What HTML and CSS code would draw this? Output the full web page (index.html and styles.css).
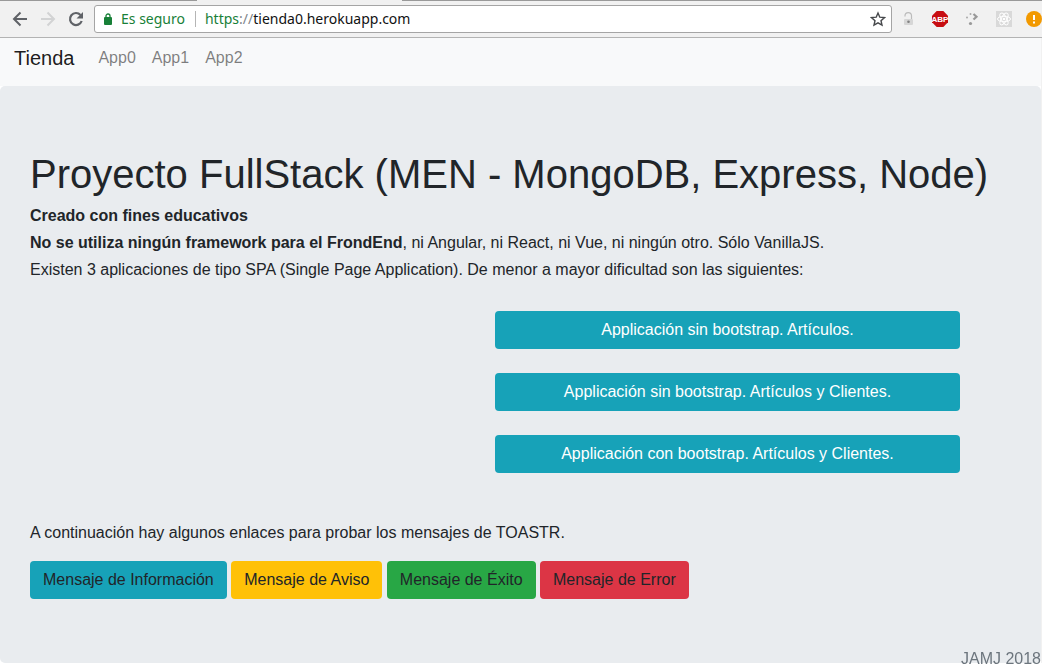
FILE: index.html
```html
<!DOCTYPE html>
<html lang="es">
<head>
<meta charset="utf-8">
<meta name="viewport" content="width=device-width, initial-scale=1">
<title>Tienda</title>
<link rel="stylesheet" href="styles.css">
</head>
<body>
<header class="browser">
  <div class="tab-edge"><span class="tab-gap"></span></div>
  <div class="toolbar">
    <div class="nav-buttons">
      <button class="icon-button" type="button" aria-label="Atrás">
        <svg width="16" height="16" viewBox="0 0 16 16" fill="none" stroke="#5f6267" stroke-width="2"><path d="M15 8H2.500M8.500 1.500L2 8l6.500 6.500"/></svg>
      </button>
      <button class="icon-button" type="button" aria-label="Adelante" disabled>
        <svg width="16" height="16" viewBox="0 0 16 16" fill="none" stroke="#d2d3d4" stroke-width="2"><path d="M1 8h12.500M7.500 1.500L14 8l-6.500 6.500"/></svg>
      </button>
      <button class="icon-button" type="button" aria-label="Recargar">
        <svg width="16" height="16" viewBox="0 0 16 16"><path d="M13.700 10A6 6 0 1 1 12.500 4" fill="none" stroke="#5f6267" stroke-width="2.200"/><path d="M15 1v6.500H8.500z" fill="#5f6267"/></svg>
      </button>
    </div>
    <div class="address">
      <svg class="lock" width="8" height="12" viewBox="0 0 8 12"><path d="M2 5V3a2 2 0 0 1 4 0v2" fill="none" stroke="#188038" stroke-width="1.300"/><rect y="4" width="8" height="8" rx="1" fill="#188038"/></svg>
      <span class="secure">Es seguro</span>
      <span class="divider"></span>
      <label class="scheme" for="url"><span class="https">https</span>://</label>
      <input class="url" id="url" type="text" value="tienda0.herokuapp.com">
      <button class="icon-button" type="button" aria-label="Marcador">
        <svg width="16" height="16" viewBox="0 0 16 16"><path d="M8 2l1.800 4.200 4.700.4-3.500 3.100 1 4.500L8 11.900l-4 2.300 1-4.500L1.500 6.600l4.700-.4z" fill="none" stroke="#46484b" stroke-width="1.400"/></svg>
      </button>
    </div>
    <div class="extensions">
      <button class="icon-button" type="button" aria-label="Candado">
        <svg width="16" height="16" viewBox="0 0 16 16"><path d="M5 5.500V4.800a3 3 0 0 1 6.500 0V8" fill="none" stroke="#bbb" stroke-width="1.200"/><rect x="4" y="8" width="9" height="6" rx="1" fill="#d6d6d6"/><circle cx="8.500" cy="10.700" r="1.300" fill="#808080"/></svg>
      </button>
      <button class="icon-button" type="button" aria-label="Bloqueador de anuncios">
        <svg width="16" height="16" viewBox="0 0 16 16"><path d="M4.700 0h6.600L16 4.700v6.600L11.300 16H4.700L0 11.300V4.700z" fill="#c70d12"/><text class="abp-text" x="8" y="11" text-anchor="middle" fill="#fff">ABP</text></svg>
      </button>
      <button class="icon-button" type="button" aria-label="Puntos">
        <svg width="16" height="16" viewBox="0 0 16 16"><g fill="#aaa"><circle cx="6.500" cy="3" r="1"/><circle cx="3" cy="6.500" r="1"/><circle cx="6.500" cy="12.500" r="1.600" fill="#999"/></g><path d="M9.500 3l3 2.700-3 2.800" fill="none" stroke="#999" stroke-width="2.200"/></svg>
      </button>
      <button class="icon-button" type="button" aria-label="React">
        <svg width="16" height="16" viewBox="0 0 16 16"><rect width="16" height="16" fill="#d9d9d9"/><g fill="none" stroke="#fff"><ellipse cx="8" cy="8" rx="6.500" ry="2.700"/><ellipse cx="8" cy="8" rx="6.500" ry="2.700" transform="rotate(60 8 8)"/><ellipse cx="8" cy="8" rx="6.500" ry="2.700" transform="rotate(120 8 8)"/></g><circle cx="8" cy="8" r="1.300" fill="#fff"/></svg>
      </button>
      <button class="icon-button notice" type="button" aria-label="Aviso del navegador">
        <svg width="16" height="16" viewBox="0 0 16 16"><circle cx="8" cy="8" r="8" fill="#f29900"/><path d="M7 4h2v5H7zM7 10.500h2v2H7z" fill="#fff"/></svg>
      </button>
    </div>
  </div>
</header>
<div class="page">
  <nav class="navbar">
    <a class="brand" href="#">Tienda</a>
    <a class="nav-link" href="#">App0</a>
    <a class="nav-link" href="#">App1</a>
    <a class="nav-link" href="#">App2</a>
  </nav>
  <main class="jumbotron">
    <h1 class="title">Proyecto FullStack (MEN - MongoDB, Express, Node)</h1>
    <div class="intro">
      <p><strong>Creado con fines educativos</strong></p>
      <p><strong>No se utiliza ningún framework para el FrondEnd</strong>, ni Angular, ni React, ni Vue, ni ningún otro. Sólo VanillaJS.</p>
      <p>Existen 3 aplicaciones de tipo SPA (Single Page Application). De menor a mayor dificultad son las siguientes:</p>
    </div>
    <div class="apps">
      <a class="btn app-link" href="#">Applicación sin bootstrap. Artículos.</a>
      <a class="btn app-link" href="#">Applicación sin bootstrap. Artículos y Clientes.</a>
      <a class="btn app-link" href="#">Applicación con bootstrap. Artículos y Clientes.</a>
    </div>
    <p class="toast-text">A continuación hay algunos enlaces para probar los mensajes de TOASTR.</p>
    <div class="toasts">
      <button class="btn info" type="button">Mensaje de Información</button>
      <button class="btn warning" type="button">Mensaje de Aviso</button>
      <button class="btn success" type="button">Mensaje de Éxito</button>
      <button class="btn danger" type="button">Mensaje de Error</button>
    </div>
  </main>
</div>
<footer class="footer">JAMJ 2018</footer>
</body>
</html>
```
FILE: styles.css
```css
* {
  box-sizing: border-box;
}

body {
  margin: 0;
  background: #fff;
  color: #212529;
  font: 16px/24px "Liberation Sans", Arial, sans-serif;
}

p,
h1 {
  margin: 0;
}

a {
  text-decoration: none;
}

.browser {
  background: #f1f1f1;
  border-bottom: 1px solid #b3b3b3;
}

.tab-edge {
  height: 1px;
  padding-left: 197px;
  background: #999;
}

.tab-gap {
  display: block;
  width: 205px;
  height: 1px;
  background: #f1f1f1;
}

.toolbar {
  display: flex;
  align-items: center;
  height: 36px;
  padding-left: 12px;
}

.nav-buttons {
  display: flex;
  gap: 12px;
  margin-right: 10px;
}

.icon-button {
  display: block;
  flex: none;
  width: 16px;
  height: 16px;
  padding: 0;
  border: 0;
  background: none;
}

.icon-button svg {
  display: block;
}

.address {
  display: flex;
  flex: 1;
  align-items: center;
  min-width: 0;
  height: 28px;
  padding: 0 5px 0 9px;
  border: 1px solid #a5a5a5;
  border-radius: 3px;
  background: #fff;
  font: 14px/20px "Noto Sans", sans-serif;
}

.secure {
  margin-left: 9px;
  color: #188038;
}

.divider {
  width: 1px;
  height: 16px;
  margin: 0 9px 0 10px;
  background: #b5b5b5;
}

.scheme {
  color: #80868b;
}

.https {
  color: #188038;
}

.url {
  flex: 1;
  min-width: 0;
  padding: 0;
  border: 0;
  outline: 0;
  background: none;
  color: #111;
  font: inherit;
}

.extensions {
  display: flex;
  gap: 16px;
  margin-left: 8px;
}

.notice {
  margin-left: -2px;
}

.abp-text {
  font: bold 8px "Liberation Sans", sans-serif;
}

.page {
  border-right: 1px solid #f1f1f1;
}

.navbar {
  display: flex;
  gap: 16px;
  height: 48px;
  padding: 8px 14px;
  background: #f8f9fa;
}

.brand {
  margin-right: 8px;
  color: rgba(0, 0, 0, 0.9);
  font-size: 20px;
}

.nav-link {
  color: rgba(0, 0, 0, 0.5);
}

.jumbotron {
  padding: 64px 30px;
  border-radius: 5px;
  background: #e9ecef;
}

.title {
  margin-bottom: 4px;
  font-size: 40px;
  font-weight: 400;
  line-height: 48px;
}

.intro {
  line-height: 27px;
}

.apps {
  display: grid;
  grid-template-columns: 1fr 1fr;
  row-gap: 24px;
  margin: 28px 51px 48px 0;
}

.btn {
  padding: 6px 12px;
  border: 1px solid transparent;
  border-radius: 4px;
  color: #212529;
  font: inherit;
  text-align: center;
}

.app-link {
  grid-column: 2;
  background: #17a2b8;
  color: #fff;
}

.toast-text {
  margin-bottom: 16px;
}

.info {
  background: #17a2b8;
}

.warning {
  background: #ffc107;
}

.success {
  background: #28a745;
}

.danger {
  background: #dc3545;
}

.footer {
  position: fixed;
  right: 1px;
  bottom: 0;
  color: #6c757d;
}
```
